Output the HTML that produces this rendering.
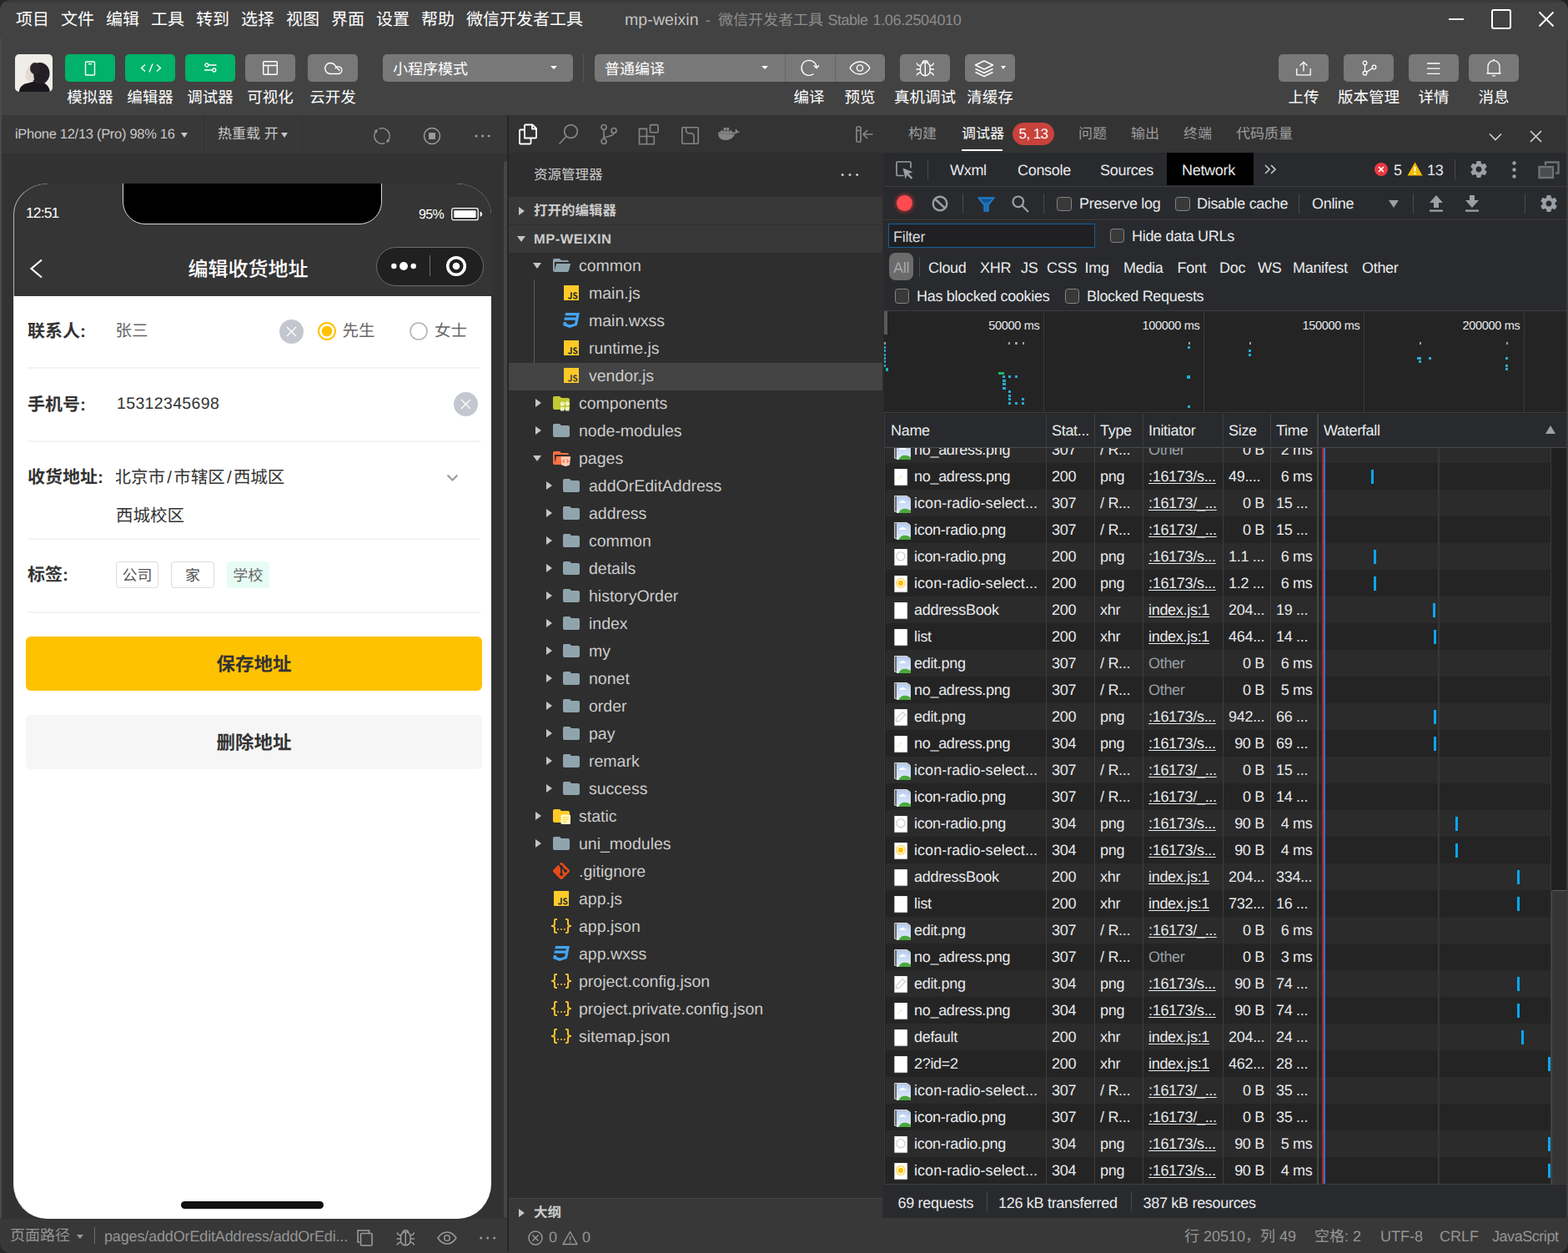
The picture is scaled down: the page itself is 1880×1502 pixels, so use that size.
<!DOCTYPE html>
<html lang="zh-CN">
<head>
<meta charset="utf-8">
<title>mp-weixin - WeChat DevTools</title>
<style>
html,body{margin:0;padding:0}
body{width:1880px;height:1502px;overflow:hidden;position:relative;background:#424242;font-family:"Liberation Sans","Noto Sans CJK SC",sans-serif;color:#fff;font-size:18px;-webkit-font-smoothing:antialiased;text-rendering:geometricPrecision}
*{box-sizing:border-box}
.a{position:absolute}
.t{position:absolute;white-space:nowrap;line-height:24px;height:24px}
svg{display:block}
svg.i{position:absolute;overflow:visible}
/* top */
#menubar{left:0;top:0;width:1880px;height:46px;background:#424242}
#menubar .m{position:absolute;top:11.5px;font-size:20px;line-height:24px;color:#fff;white-space:nowrap}
#toolbar{left:0;top:46px;width:1880px;height:92px;background:#424242}
.tb{position:absolute;top:19px;width:60px;height:33px;border-radius:5px;background:#787878}
.tb.g{background:#00b26a}
.tl{position:absolute;top:59px;width:120px;margin-left:-30px;text-align:center;font-size:18.5px;line-height:24px;color:#fff;white-space:nowrap}
.dd{position:absolute;top:19px;height:33px;background:#787878;border-radius:5px;font-size:18px;line-height:37px;color:#fff;padding-left:12px}
.caret{position:absolute;width:0;height:0;border-left:4px solid transparent;border-right:4px solid transparent;border-top:4.5px solid #fff}
</style>
<style>
/* sim */
#simbar{left:2px;top:138px;width:606px;height:46px;background:#383838}
#simpanel{left:2px;top:184px;width:606px;height:1277px;background:#323232;z-index:2}
#phone{z-index:3}
#vdiv1{left:608px;top:138px;width:2px;height:1324px;background:#262626}
#phone{left:16px;top:220px;width:573.4px;height:1240.5px;border-radius:42px 42px 40px 40px/37px 37px 42px 42px;background:#fff;overflow:hidden}
#pedge{left:0;top:0;width:574px;height:1240px;border-radius:inherit;box-shadow:inset 1px 0 0 rgba(235,225,208,.75)}
#pnav{left:0;top:0;width:574px;height:134.7px;background:#353535}
.lbl{position:absolute;left:17px;font-size:21px;line-height:28px;color:#333;white-space:nowrap}
.val{position:absolute;left:123px;font-size:19.5px;line-height:28px;color:#666;white-space:nowrap}
.hr{position:absolute;left:17px;width:543px;height:2px;background:#f3f3f3}
.clr{position:absolute;width:29px;height:29px;border-radius:50%;background:#c4c7d0}
.sl{font-style:normal;display:inline-block;width:10.2px;text-align:center}
.tag{position:absolute;top:453px;height:32px;border:1px solid #dcdcdc;border-radius:4px;font-size:18px;line-height:32px;color:#555;text-align:center;background:#fff}
.btn{position:absolute;left:15px;width:547px;height:64px;border-radius:6px;font-size:22px;line-height:64px;text-align:center;color:#333}
</style>
<style>
/* explorer */
#iconbar{left:610px;top:138px;width:1270px;height:45px;background:#333}
#explorer{left:610px;top:183px;width:448px;height:1279px;background:#2e2e2e;overflow:hidden}
.sec{position:absolute;left:0;width:448px;height:33px;background:#383838;font-size:16.5px;line-height:35px;color:#ccc;font-weight:bold;padding-left:30px;white-space:nowrap}
.row{position:absolute;left:0;width:448px;height:33px;font-size:19.5px;line-height:33px;color:#ccc;white-space:nowrap;letter-spacing:0}
.row.sel{background:#444}
.row span{position:absolute;top:0}
.tri-r{position:absolute;width:0;height:0;border-top:5px solid transparent;border-bottom:5px solid transparent;border-left:7px solid #c5c5c5}
.tri-d{position:absolute;width:0;height:0;border-left:5px solid transparent;border-right:5px solid transparent;border-top:7px solid #c5c5c5}
#vdiv2{left:1058px;top:183px;width:2px;height:1279px;background:#2c2c2c}
/* status */
#status{left:0;top:1460px;width:1880px;height:42px;background:#383838;color:#9a9a9a;font-size:18px}
#status .t{top:10px;color:#959595}
</style>
<style>
/* devtools */
#dev{left:1060px;top:183px;width:818px;height:1277px;background:#242424;overflow:hidden;color:#e8eaed;font-size:18px;letter-spacing:-0.3px}
#dtabs{left:0;top:0;width:818px;height:41px;background:#292a2d;border-bottom:1px solid #3d3d3d}
#dtabs .t{top:9px;color:#e8eaed}
#ntool{left:0;top:41px;width:818px;height:40px;background:#292a2d;border-bottom:1px solid #3d3d3d}
#ntool .t{top:8px}
.vsep{position:absolute;width:1px;background:#4a4a4a}
.cb{position:absolute;width:17.5px;height:17.5px;border:1.5px solid #858585;border-radius:3.5px;background:#393939}
#frow{left:0;top:82px;width:818px;height:38px;background:#292a2d}
#trow{left:0;top:120px;width:818px;height:37px;background:#292a2d}
#brow{left:0;top:157px;width:818px;height:33px;background:#292a2d;border-bottom:1px solid #3d3d3d}
#ov{left:0;top:190px;width:818px;height:122px;background:#242424;border-bottom:1px solid #3d3d3d}
#th{left:0;top:313px;width:818px;height:41px;background:#292a2d;border-bottom:1px solid #4a4a4a}
#th .t{top:8px;color:#e8eaed}
#rows{left:2px;top:354px;width:798px;height:883px;overflow:hidden}
.r{position:absolute;left:-2px;width:800px;height:32px;line-height:32px;white-space:nowrap;color:#e8eaed}
.r.o{background:#2b2b2b}
.r.red{color:#9aa0a6}
.r span{position:absolute;top:0}
.r u{text-decoration:underline;text-underline-offset:2px}
.colsep{position:absolute;top:313px;width:1px;height:924px;background:#3d3d3d}
.wb{position:absolute;width:3px;height:17px;background:#0ba6f2}
#sum{left:0;top:1236px;width:818px;height:41px;background:#292a2d;border-top:1px solid #3d3d3d}
#sum .t{top:10px;color:#e8eaed}
</style>
</head>
<body>
<!-- ===== menubar ===== -->
<div class="a" id="menubar">
<div class="a" style="left:0;top:0;width:1880px;height:3px;background:#3a3a3a"></div>
<div class="m" style="left:19px">项目</div><div class="m" style="left:73px">文件</div><div class="m" style="left:127px">编辑</div><div class="m" style="left:181px">工具</div><div class="m" style="left:235px">转到</div><div class="m" style="left:289px">选择</div><div class="m" style="left:343px">视图</div><div class="m" style="left:397px">界面</div><div class="m" style="left:451px">设置</div><div class="m" style="left:505px">帮助</div><div class="m" style="left:559px">微信开发者工具</div>
<div class="m" style="left:749px;color:#c2c2c2;font-size:19.5px;letter-spacing:0.1px">mp-weixin</div><div class="m" style="left:846px;color:#8c8c8c;font-size:18px">-</div><div class="m" style="left:861px;color:#8c8c8c;font-size:18px">微信开发者工具</div><div class="m" style="left:992.5px;color:#8c8c8c;font-size:18px;letter-spacing:-0.5px">Stable</div><div class="m" style="left:1046.5px;color:#8c8c8c;font-size:18px;letter-spacing:-0.35px">1.06.2504010</div>
<svg class="i" style="left:1730px;top:6px" width="140" height="36" viewBox="0 0 140 36" fill="none" stroke="#fff"><path d="M7 17H25" stroke-width="1.8"/><rect x="59" y="6" width="22" height="22" rx="2" stroke-width="2"/><path d="M115.5 8.500L132.500 25.500M132.500 8.500L115.500 25.500" stroke-width="1.900"/></svg>
</div>
<!-- ===== toolbar ===== -->
<div class="a" id="toolbar">
<div class="a" style="left:18px;top:19px;width:45px;height:45px;border-radius:5px;background:#efede7;overflow:hidden">
 <svg class="i" style="left:0;top:0" width="45" height="45" viewBox="0 0 45 45"><path d="M5 45c0-5 4-9.500 11-10.500l9-2.500c8 0 16 4 17 13z" fill="#19171c"/><ellipse cx="30" cy="23" rx="11.500" ry="13" fill="#231f24"/><path d="M21 13c-4 0-8 4-8 10c0 2 0 3-1 4.500c1 2 3 3 5 5.500l6-2z" fill="#e4d9d3"/><ellipse cx="24" cy="17" rx="6" ry="7" fill="#2b2529"/></svg>
</div>
<div class="tb g" style="left:78px"><svg class="i" style="left:23px;top:8px" width="14" height="18" viewBox="0 0 14 18" fill="none" stroke="#fff" stroke-width="1.4"><rect x="1.5" y="1" width="11" height="16" rx="1"/><path d="M5 3.7h4"/></svg></div>
<div class="tb g" style="left:150px"><svg class="i" style="left:18px;top:10px" width="26" height="13" viewBox="0 0 26 13" fill="none" stroke="#fff" stroke-width="1.4"><path d="M6 2.5L1.5 6.5L6 10.5M20 2.5L24.5 6.5L20 10.5M15 1.5L11 11.5"/></svg></div>
<div class="tb g" style="left:222px"><svg class="i" style="left:22.500px;top:10px" width="15" height="12" viewBox="0 0 15 12" fill="none" stroke="#fff" stroke-width="1.300"><path d="M5 3H14.500M0 9H9.500"/><circle cx="2.800" cy="3" r="2"/><circle cx="11.800" cy="9" r="2"/></svg></div>
<div class="tb" style="left:294px"><svg class="i" style="left:21px;top:8px" width="18" height="17" viewBox="0 0 18 17" fill="none" stroke="#fff" stroke-width="1.4"><rect x="0.7" y="0.7" width="16.6" height="15.6" rx="1"/><path d="M0.7 5.5H17.3M6.5 5.5V16.3"/></svg></div>
<div class="tb" style="left:369px"><svg class="i" style="left:19.500px;top:9px" width="22" height="16" viewBox="0 0 22 16" fill="none" stroke="#fff" stroke-width="1.300"><path d="M11.200 14.500H7.300a6.500 6.500 0 1 1 5.400-10l5.800 6.500M11.200 14.500h5.300a4.300 4.300 0 1 0-3.800-6.300"/></svg></div>
<div class="tl" style="left:78px">模拟器</div><div class="tl" style="left:150px">编辑器</div><div class="tl" style="left:222px">调试器</div><div class="tl" style="left:294px">可视化</div><div class="tl" style="left:369px">云开发</div>
<div class="dd" style="left:459px;width:228px">小程序模式<div class="caret" style="left:201px;top:14px"></div></div>
<div class="a" style="left:699px;top:19px;width:1px;height:33px;background:#565656"></div>
<div class="dd" style="left:713px;width:348px">普通编译<div class="caret" style="left:200px;top:14px"></div>
 <div class="a" style="left:228px;top:0;width:1px;height:33px;background:#666"></div><div class="a" style="left:288px;top:0;width:1px;height:33px;background:#666"></div>
 <svg class="i" style="left:246px;top:6px" width="22" height="21" viewBox="0 0 22 21" fill="none" stroke="#fff" stroke-width="1.4"><path d="M16.500 17.500A9 9 0 1 1 20 10.300"/><path d="M16.700 7.500L20.100 10.800L23 7.300"/></svg>
 <svg class="i" style="left:305px;top:8px" width="26" height="17" viewBox="0 0 26 17" fill="none" stroke="#fff" stroke-width="1.4"><path d="M1 8.5C4 3.5 8 1 13 1s9 2.5 12 7.5c-3 5-7 7.500-12 7.500S4 13.500 1 8.500z"/><circle cx="13" cy="8.500" r="3.600"/></svg>
</div>
<div class="tl" style="left:940px">编译</div><div class="tl" style="left:1001px">预览</div>
<div class="tb" style="left:1079px"><svg class="i" style="left:17px;top:5px" width="26" height="23" viewBox="0 0 26 23" fill="none" stroke="#fff" stroke-width="1.4"><path d="M7.500 10.500a5.800 5.800 0 0 1 11.600 0v4.500a5.800 5.800 0 0 1-11.600 0z"/><path d="M13.300 4.800v16M9.800 5.500a3.600 3.600 0 0 1 7 0M7.500 9L4.500 8L3 5.500M7.500 13H2.500M7.500 17l-3 1l-1.500 2.500M19.100 9l3-1l1.500-2.500M19.100 13h5M19.100 17l3 1l1.500 2.500"/></svg></div>
<div class="tb" style="left:1157px"><svg class="i" style="left:11px;top:7px" width="24" height="20" viewBox="0 0 24 20" fill="none" stroke="#fff" stroke-width="1.4" stroke-linejoin="round"><path d="M12 1L22.500 6L12 11L1.500 6z"/><path d="M1.500 10.500L12 15.500l10.500-5M1.500 14.500L12 19.500l10.500-5"/></svg><div class="caret" style="left:43px;top:14px;border-left-width:3.700px;border-right-width:3.700px;border-top-width:4.800px"></div></div>
<div class="tl" style="left:1079px">真机调试</div><div class="tl" style="left:1157px">清缓存</div>
<div class="tb" style="left:1533px"><svg class="i" style="left:21px;top:8px" width="18" height="18" viewBox="0 0 18 18" fill="none" stroke="#fff" stroke-width="1.300"><path d="M.8 9V16.800H17.200V9M9 12.500V1.500M4.500 5.800L9 1.300l4.500 4.500"/></svg></div>
<div class="tb" style="left:1611px"><svg class="i" style="left:22px;top:7px" width="18" height="19" viewBox="0 0 18 19" fill="none" stroke="#fff" stroke-width="1.300"><circle cx="3.500" cy="3.500" r="2.300"/><circle cx="3.500" cy="15.700" r="2.300"/><circle cx="14.500" cy="8.500" r="2.300"/><path d="M3.500 5.800v7.600M5.400 14.400L12.600 9.800"/></svg></div>
<div class="tb" style="left:1689px"><svg class="i" style="left:22px;top:10px" width="16" height="14" viewBox="0 0 16 14" fill="none" stroke="#fff" stroke-width="1.300"><path d="M0 1h15.500M0 7.200h15.500M0 13.400h15.500"/></svg></div>
<div class="tb" style="left:1761px"><svg class="i" style="left:21px;top:5px" width="18" height="22" viewBox="0 0 18 22" fill="none" stroke="#fff" stroke-width="1.300"><path d="M2 18V9.700a7 7 0 0 1 14 0V18M.5 18h17M9 2.600V.8M7 20.800h4"/></svg></div>
<div class="tl" style="left:1533px">上传</div><div class="tl" style="left:1611px">版本管理</div><div class="tl" style="left:1689px">详情</div><div class="tl" style="left:1761px">消息</div>
</div>
<!-- ===== simulator ===== -->
<div class="a" style="left:0;top:46px;width:2px;height:1456px;background:#4a4a4a"></div>
<div class="a" id="simbar">
<div class="t" style="left:16px;top:11px;font-size:16.5px;color:#c8c8c8;letter-spacing:-0.3px">iPhone 12/13 (Pro) 98% 16</div>
<div class="caret" style="left:215px;top:21px;border-top-color:#c8c8c8;border-left-width:4.5px;border-right-width:4.5px;border-top-width:6px"></div>
<div class="a" style="left:242px;top:0;width:1px;height:46px;background:#313131"></div>
<div class="t" style="left:259px;top:11px;font-size:17px;color:#c8c8c8">热重载 开</div>
<div class="caret" style="left:335px;top:21px;border-top-color:#c8c8c8;border-left-width:4.5px;border-right-width:4.5px;border-top-width:6px"></div>
<div class="a" style="left:360px;top:0;width:1px;height:46px;background:#313131"></div>
<svg class="i" style="left:445.200px;top:14px" width="22" height="22" viewBox="0 0 22 22" fill="none" stroke="#9a9a9a" stroke-width="1.400"><path d="M14.45 19.53A9.2 9.2 0 0 1 3.75 5.34M7.55 2.47A9.2 9.2 0 0 1 18.25 16.66"/><path d="M5.72 2.81L1.68 4.74L4.83 7.20zM16.28 19.19L20.32 17.26L17.17 14.80z" fill="#9a9a9a" stroke="none"/></svg>
<svg class="i" style="left:505px;top:14px" width="22" height="22" viewBox="0 0 22 22" fill="none" stroke="#9a9a9a" stroke-width="1.500"><circle cx="11" cy="11" r="9.500"/><rect x="7" y="7" width="8" height="8" rx="1" fill="#9a9a9a" stroke="none"/></svg>
<svg class="i" style="left:566.500px;top:23px" width="22" height="4" viewBox="0 0 22 4" fill="#9a9a9a"><circle cx="2" cy="2" r="1.600"/><circle cx="9.600" cy="2" r="1.600"/><circle cx="17.100" cy="2" r="1.600"/></svg>
</div>
<div class="a" id="simpanel">
<div class="a" style="left:602px;top:9px;width:3.500px;height:1267px;background:#464646;border-radius:2px"></div>
</div>
<div class="a" id="vdiv1"></div>
<div class="a" id="phone">
 <div class="a" id="pnav">
  <div class="a" style="left:131px;top:-2px;width:311px;height:50.500px;background:#000;border:1px solid #d8d8d8;border-radius:0 0 27px 27px"></div>
  <div class="t" style="left:15px;top:23px;font-size:17.500px;color:#fff;letter-spacing:-0.900px">12:51</div>
  <div class="t" style="left:486px;top:26px;font-size:16px;color:#fff;letter-spacing:-0.700px">95%</div>
  <svg class="i" style="left:524px;top:28px" width="40" height="18" viewBox="0 0 40 18"><rect x="1.700" y="1.700" width="31.500" height="14" rx="2.200" fill="none" stroke="#fff" stroke-width="1.300"/><rect x="4.300" y="4.300" width="26.300" height="8.800" rx=".8" fill="#fff"/><path d="M35.700 5.800c3.300 .8 3.300 5 0 5.900z" fill="#fff"/></svg>
  <svg class="i" style="left:19px;top:90px" width="17" height="24" viewBox="0 0 17 24" fill="none" stroke="#fff" stroke-width="2.200"><path d="M15 1.500L2.500 12L15 22.500"/></svg>
  <div class="t" style="left:209.500px;top:87.500px;font-size:24px;line-height:32px;height:32px;color:#fff;font-weight:500">编辑收货地址</div>
  <div class="a" style="left:435px;top:75.500px;width:128.500px;height:47px;border-radius:24px;border:1px solid #6c6c6c;background:#202020"></div>
  <svg class="i" style="left:435px;top:75px" width="129" height="48" viewBox="0 0 129 48"><circle cx="21.300" cy="24" r="3.200" fill="#fff"/><circle cx="33" cy="24" r="5" fill="#fff"/><circle cx="44.700" cy="24" r="3.200" fill="#fff"/><path d="M64.500 11v25" stroke="#6c6c6c" stroke-width="1"/><circle cx="96" cy="24" r="10.300" fill="none" stroke="#fff" stroke-width="3.500"/><circle cx="96" cy="24" r="4.300" fill="#fff"/></svg>
 </div>
 <!-- row 1 -->
 <div class="lbl" style="top:164px"><b>联系人</b><b>:</b></div>
 <div class="val" style="top:162.500px;left:122.500px">张三</div>
 <div class="clr" style="left:318.500px;top:163px"></div><svg class="i" style="left:318.500px;top:163px" width="29" height="29" viewBox="0 0 29 29" stroke="#fff" stroke-width="1.400"><path d="M9 9l11 11M20 9L9 20"/></svg>
 <svg class="i" style="left:364px;top:165px" width="24" height="24" viewBox="0 0 24 24"><circle cx="12" cy="12" r="10" fill="#fff" stroke="#ffc200" stroke-width="2"/><circle cx="12" cy="12" r="6.300" fill="#ffc200"/></svg>
 <div class="val" style="top:162.500px;left:394.500px">先生</div>
 <svg class="i" style="left:474px;top:165px" width="24" height="24" viewBox="0 0 24 24"><circle cx="12" cy="12" r="10" fill="#fff" stroke="#b5b5b5" stroke-width="1.600"/></svg>
 <div class="val" style="top:162.500px;left:505px">女士</div>
 <div class="hr" style="top:220px"></div>
 <!-- row 2 -->
 <div class="lbl" style="top:252px"><b>手机号</b><b>:</b></div>
 <div class="val" style="top:250px;left:124px;color:#333;font-size:19.500px;letter-spacing:0.350px">15312345698</div>
 <div class="clr" style="left:527.500px;top:250px"></div><svg class="i" style="left:527.500px;top:250px" width="29" height="29" viewBox="0 0 29 29" stroke="#fff" stroke-width="1.400"><path d="M9 9l11 11M20 9L9 20"/></svg>
 <div class="hr" style="top:308px"></div>
 <!-- row 3 -->
 <div class="lbl" style="top:339px"><b>收货地址</b><b>:</b></div>
 <div class="a" style="left:122.500px;top:336px;width:380px;height:34px;overflow:hidden"><div class="val" style="left:-2px;top:3px;color:#333;font-size:20.500px">北京市<i class="sl">/</i>市辖区<i class="sl">/</i>西城区</div></div>
 <svg class="i" style="left:519px;top:348px" width="15" height="10" viewBox="0 0 15 10" fill="none" stroke="#9a9a9a" stroke-width="2"><path d="M1.500 1.500l6 6l6-6"/></svg>
 <div class="val" style="left:123px;top:385px;color:#333;font-size:20.500px">西城校区</div>
 <div class="hr" style="top:425px"></div>
 <!-- row 4 -->
 <div class="lbl" style="top:456px"><b>标签</b><b>:</b></div>
 <div class="tag" style="left:123px;width:51px">公司</div>
 <div class="tag" style="left:189px;width:52px">家</div>
 <div class="tag" style="left:256px;width:50.500px;background:#e6fcf5;border-color:#e6fcf5;color:#666">学校</div>
 <div class="hr" style="top:513px"></div>
 <div class="btn" style="top:543px;height:64.500px;line-height:68px;font-size:22.500px;background:#ffc200"><b>保存地址</b></div>
 <div class="btn" style="top:637px;height:64.500px;line-height:68px;font-size:22.500px;background:#f6f6f6"><b>删除地址</b></div>
 <div class="a" style="left:201px;top:1220px;width:171px;height:9px;border-radius:5px;background:#111"></div>
 <div class="a" id="pedge"></div>
</div>
<!-- ===== icon bar + panel tabs ===== -->
<svg width="0" height="0" style="position:absolute"><defs>
<symbol id="i-folder" viewBox="0 0 24 24"><path fill="#90a4ae" d="M10 4H4c-1.110 0-2 .890-2 2v12a2 2 0 0 0 2 2h16a2 2 0 0 0 2-2V8c0-1.110-.900-2-2-2h-8l-2-2z"/></symbol>
<symbol id="i-folder-open" viewBox="0 0 24 24"><path fill="#90a4ae" d="M19 20H4a2 2 0 0 1-2-2V6c0-1.110.890-2 2-2h6l2 2h7a2 2 0 0 1 2 2H4v10l2.140-8h17.070l-2.280 8.500c-.230.870-1.010 1.500-1.930 1.500z"/></symbol>
<symbol id="i-js" viewBox="0 0 24 24"><path fill="#ffca28" d="M3 3h18v18H3V3m4.730 15.040c.400.850 1.190 1.550 2.540 1.550 1.500 0 2.530-.800 2.530-2.550v-5.780h-1.700V17c0 .860-.350 1.080-.900 1.080-.580 0-.820-.400-1.090-.870l-1.380.830m5.980-.180c.500.980 1.510 1.730 3.090 1.730 1.600 0 2.800-.830 2.800-2.360 0-1.410-.810-2.040-2.250-2.660l-.420-.180c-.730-.310-1.040-.520-1.040-1.020 0-.410.310-.730.810-.730.480 0 .800.210 1.090.730l1.310-.870c-.550-.960-1.330-1.330-2.400-1.330-1.510 0-2.480.960-2.480 2.230 0 1.380.810 2.030 2.030 2.550l.420.180c.780.340 1.240.550 1.240 1.130 0 .480-.450.830-1.150.830-.830 0-1.310-.430-1.670-1.030l-1.380.800z"/></symbol>
<symbol id="i-css" viewBox="0 0 24 24"><path fill="#42a5f5" d="M5 3l-.650 3.340h13.590L17.500 8.500H3.920l-.660 3.330h13.590l-.760 3.810-5.480 1.810-4.750-1.810.330-1.640H2.850l-.790 4 7.850 3 9.050-3 1.200-6.030.240-1.210L21.940 3H5z"/></symbol>
<symbol id="i-json" viewBox="0 0 24 24"><path fill="#fbc02d" d="M5 3h2v2H5v5a2 2 0 0 1-2 2 2 2 0 0 1 2 2v5h2v2H5c-1.070-.270-2-.900-2-2v-4a2 2 0 0 0-2-2H0v-2h1a2 2 0 0 0 2-2V5a2 2 0 0 1 2-2m14 0a2 2 0 0 1 2 2v4a2 2 0 0 0 2 2h1v2h-1a2 2 0 0 0-2 2v4a2 2 0 0 1-2 2h-2v-2h2v-5a2 2 0 0 1 2-2 2 2 0 0 1-2-2V5h-2V3h2m-7 12a1 1 0 0 1 1 1 1 1 0 0 1-1 1 1 1 0 0 1-1-1 1 1 0 0 1 1-1m-4 0a1 1 0 0 1 1 1 1 1 0 0 1-1 1 1 1 0 0 1-1-1 1 1 0 0 1 1-1m8 0a1 1 0 0 1 1 1 1 1 0 0 1-1 1 1 1 0 0 1-1-1 1 1 0 0 1 1-1z"/></symbol>
<symbol id="i-git" viewBox="0 0 24 24"><path fill="#e64a19" d="M2.600 10.590L8.380 4.800l1.690 1.700c-.240.850.150 1.780.930 2.230v5.540c-.600.340-1 .990-1 1.730a2 2 0 0 0 2 2 2 2 0 0 0 2-2c0-.740-.400-1.390-1-1.730V9.410l2.070 2.090c-.070.150-.070.320-.070.500a2 2 0 0 0 2 2 2 2 0 0 0 2-2 2 2 0 0 0-2-2c-.180 0-.350 0-.500.070L13.930 7.500a1.980 1.980 0 0 0-1.150-2.340c-.430-.160-.880-.200-1.280-.090L9.800 3.380l.790-.780c.780-.790 2.040-.790 2.820 0l7.990 7.990c.790.780.790 2.040 0 2.820l-7.990 7.990c-.780.790-2.040.790-2.820 0L2.600 13.410c-.790-.780-.790-2.040 0-2.820z"/></symbol>
<symbol id="i-fcomp" viewBox="0 0 24 24"><path fill="#c0ca33" d="M10 4H4c-1.110 0-2 .890-2 2v12a2 2 0 0 0 2 2h16a2 2 0 0 0 2-2V8c0-1.110-.900-2-2-2h-8l-2-2z"/><path fill="#f0f4c3" d="M11 11h4.500v4.500H11zM11 17h4.500v4.500H11zM17 17h4.500v4.500H17zM19.250 9.500l3.200 3.250-3.200 3.250-3.200-3.250z"/></symbol>
<symbol id="i-fpages" viewBox="0 0 24 24"><path fill="#ff7043" d="M19 20H4a2 2 0 0 1-2-2V6c0-1.110.890-2 2-2h6l2 2h7a2 2 0 0 1 2 2H4v10l2.140-8h17.070l-2.280 8.500c-.230.870-1.010 1.500-1.930 1.500z"/><path fill="#ffccbc" d="M11.500 10.500h11.500l-1 10-4.750 1.500-4.750-1.500z"/><path fill="none" stroke="#ff7043" stroke-width="1.300" d="M16 13.700l-2 2 2 2M18.500 13.700l2 2-2 2"/></symbol>
<symbol id="i-fstatic" viewBox="0 0 24 24"><path fill="#ffca28" d="M10 4H4c-1.110 0-2 .890-2 2v12a2 2 0 0 0 2 2h16a2 2 0 0 0 2-2V8c0-1.110-.900-2-2-2h-8l-2-2z"/><path fill="#fff9c4" d="M13 10.500h8.500a1.500 1.500 0 0 1 1.500 1.500v8.500a1.500 1.500 0 0 1-1.500 1.500H13a1.500 1.500 0 0 1-1.500-1.500V12a1.500 1.500 0 0 1 1.500-1.500z"/><path stroke="#ffca28" stroke-width="1.200" d="M14 14h6.500M14 16.500h6.500M14 19h4.500"/></symbol>
</defs></svg>
<div class="a" id="iconbar">
<svg class="i" style="left:11px;top:10px" width="24" height="26" viewBox="0 0 24 26" fill="none" stroke="#fff" stroke-width="1.800" stroke-linejoin="round"><path d="M8 17.500V2.500a1 1 0 0 1 1-1h8.500l4.500 4.500v10.500a1 1 0 0 1-1 1z"/><path d="M17 1.500v5h5"/><path d="M8 7.500H3a1 1 0 0 0-1 1v15a1 1 0 0 0 1 1h11.500a1 1 0 0 0 1-1v-6"/></svg>
<svg class="i" style="left:59px;top:10px" width="25" height="26" viewBox="0 0 25 26" fill="none" stroke="#858585" stroke-width="1.800"><circle cx="15.500" cy="9.500" r="7.800"/><path d="M10 15.500L1.500 24.500"/></svg>
<svg class="i" style="left:109.300px;top:10px" width="22" height="26" viewBox="0 0 22 26" fill="none" stroke="#858585" stroke-width="1.700"><circle cx="5" cy="4.500" r="3"/><circle cx="5" cy="21.500" r="3"/><circle cx="17" cy="8.500" r="3"/><path d="M5 7.500v11M17 11.500c0 5-12 3-12 7"/></svg>
<svg class="i" style="left:155px;top:10px" width="26" height="26" viewBox="0 0 26 26" fill="none" stroke="#858585" stroke-width="1.600"><path d="M1.500 6.400H10.400V15.500H19.300V24.700H1.500ZM1.500 15.500H10.400V24.700"/><rect x="14.500" y="1.600" width="9.600" height="9.200" rx="1"/></svg>
<svg class="i" style="left:207px;top:14px" width="21" height="21" viewBox="0 0 21 21" fill="none" stroke="#858585" stroke-width="1.600"><rect x=".8" y=".8" width="19.400" height="19.400" rx="1"/><path d="M5.500 .8v3.500a3.500 3.500 0 0 0 3.500 3.500h2.500a3.500 3.500 0 0 1 3.500 3.500v9"/></svg>
<svg class="i" style="left:250px;top:13px" width="27" height="20" viewBox="0 0 27 20" fill="#858585"><path d="M1 9.500h19.500c1.800 0 3-.600 3.800-1.800c.800.300 1.800.300 2.500-.200c-.600-1-1.500-1.300-2.500-1.100c-.300-1.400-1-2.300-2-2.900c-1 1.300-1 2.800-.300 4H1c-.500 5 2.500 9.500 8.500 9.500c5.500 0 9.500-2.500 11.500-7z"/><rect x="4" y="5.500" width="3" height="3"/><rect x="7.600" y="5.500" width="3" height="3"/><rect x="11.200" y="5.500" width="3" height="3"/><rect x="7.600" y="2" width="3" height="3"/><rect x="11.200" y="2" width="3" height="3"/><rect x="14.800" y="5.500" width="3" height="3"/></svg>
<svg class="i" style="left:416px;top:13px" width="21" height="20" viewBox="0 0 21 20" fill="none" stroke="#858585" stroke-width="1.700"><rect x="1" y="1" width="5" height="18" rx="1"/><path d="M1 5.500h5M20.500 10H9.500M14 5l-5 5l5 5"/></svg>
<div class="t" style="left:479px;top:11px;font-size:17px;color:#9d9d9d">构建</div>
<div class="t" style="left:543px;top:11px;font-size:17px;color:#fff">调试器</div>
<div class="a" style="left:543px;top:41.300px;width:49px;height:1.600px;background:#fff"></div>
<div class="a" style="left:604px;top:9px;width:50px;height:27px;border-radius:14px;background:#c9423c;font-size:17px;line-height:27px;text-align:center;color:#fff;letter-spacing:-0.600px">5, 13</div>
<div class="t" style="left:683px;top:11px;font-size:17px;color:#9d9d9d">问题</div>
<div class="t" style="left:746px;top:11px;font-size:17px;color:#9d9d9d">输出</div>
<div class="t" style="left:809px;top:11px;font-size:17px;color:#9d9d9d">终端</div>
<div class="t" style="left:872px;top:11px;font-size:17px;color:#9d9d9d">代码质量</div>
<svg class="i" style="left:1175px;top:21px" width="16" height="10" viewBox="0 0 16 10" fill="none" stroke="#d0d0d0" stroke-width="1.700"><path d="M1 1.500l7 7l7-7"/></svg>
<svg class="i" style="left:1224px;top:18px" width="15" height="15" viewBox="0 0 15 15" fill="none" stroke="#d0d0d0" stroke-width="1.700"><path d="M1 1l13 13M14 1L1 14"/></svg>
</div>
<!-- ===== explorer ===== -->
<div class="a" id="explorer">
<div class="t" style="left:30px;top:15px;font-size:16.500px;color:#ccc">资源管理器</div>
<svg class="i" style="left:398px;top:24px" width="24" height="5" viewBox="0 0 24 5" fill="#ccc"><circle cx="2.200" cy="2.500" r="1.500"/><circle cx="11" cy="2.500" r="1.500"/><circle cx="19.700" cy="2.500" r="1.500"/></svg>
<div class="sec" style="top:53px">打开的编辑器<div class="tri-r" style="left:12px;top:11.500px"></div></div>
<div class="sec" style="top:87px;height:32.500px;letter-spacing:0.500px">MP-WEIXIN<div class="tri-d" style="left:10px;top:13px"></div></div>
<div class="a" style="left:30px;top:152px;width:1px;height:132px;background:#5a5a5a"></div>
<div class="row" style="top:119.5px"><div class="tri-d" style="left:29px;top:12px"></div><svg class="i" style="left:51.4px;top:3.5px" width="24" height="24"><use href="#i-folder-open"/></svg><span style="left:84px">common</span></div>
<div class="row" style="top:152.5px"><svg class="i" style="left:63px;top:3.5px" width="24" height="24"><use href="#i-js"/></svg><span style="left:96px">main.js</span></div>
<div class="row" style="top:185.5px"><svg class="i" style="left:63px;top:3.5px" width="24" height="24"><use href="#i-css"/></svg><span style="left:96px">main.wxss</span></div>
<div class="row" style="top:218.5px"><svg class="i" style="left:63px;top:3.5px" width="24" height="24"><use href="#i-js"/></svg><span style="left:96px">runtime.js</span></div>
<div class="row sel" style="top:251.5px"><svg class="i" style="left:63px;top:3.5px" width="24" height="24"><use href="#i-js"/></svg><span style="left:96px">vendor.js</span></div>
<div class="row" style="top:284.5px"><div class="tri-r" style="left:31.5px;top:10.5px"></div><svg class="i" style="left:51.4px;top:3.5px" width="24" height="24"><use href="#i-fcomp"/></svg><span style="left:84px">components</span></div>
<div class="row" style="top:317.5px"><div class="tri-r" style="left:31.5px;top:10.5px"></div><svg class="i" style="left:51.4px;top:3.5px" width="24" height="24"><use href="#i-folder"/></svg><span style="left:84px">node-modules</span></div>
<div class="row" style="top:350.5px"><div class="tri-d" style="left:29px;top:12px"></div><svg class="i" style="left:51.4px;top:3.5px" width="24" height="24"><use href="#i-fpages"/></svg><span style="left:84px">pages</span></div>
<div class="row" style="top:383.5px"><div class="tri-r" style="left:45.0px;top:10.5px"></div><svg class="i" style="left:63px;top:3.5px" width="24" height="24"><use href="#i-folder"/></svg><span style="left:96px">addOrEditAddress</span></div>
<div class="row" style="top:416.5px"><div class="tri-r" style="left:45.0px;top:10.5px"></div><svg class="i" style="left:63px;top:3.5px" width="24" height="24"><use href="#i-folder"/></svg><span style="left:96px">address</span></div>
<div class="row" style="top:449.5px"><div class="tri-r" style="left:45.0px;top:10.5px"></div><svg class="i" style="left:63px;top:3.5px" width="24" height="24"><use href="#i-folder"/></svg><span style="left:96px">common</span></div>
<div class="row" style="top:482.5px"><div class="tri-r" style="left:45.0px;top:10.5px"></div><svg class="i" style="left:63px;top:3.5px" width="24" height="24"><use href="#i-folder"/></svg><span style="left:96px">details</span></div>
<div class="row" style="top:515.5px"><div class="tri-r" style="left:45.0px;top:10.5px"></div><svg class="i" style="left:63px;top:3.5px" width="24" height="24"><use href="#i-folder"/></svg><span style="left:96px">historyOrder</span></div>
<div class="row" style="top:548.5px"><div class="tri-r" style="left:45.0px;top:10.5px"></div><svg class="i" style="left:63px;top:3.5px" width="24" height="24"><use href="#i-folder"/></svg><span style="left:96px">index</span></div>
<div class="row" style="top:581.5px"><div class="tri-r" style="left:45.0px;top:10.5px"></div><svg class="i" style="left:63px;top:3.5px" width="24" height="24"><use href="#i-folder"/></svg><span style="left:96px">my</span></div>
<div class="row" style="top:614.5px"><div class="tri-r" style="left:45.0px;top:10.5px"></div><svg class="i" style="left:63px;top:3.5px" width="24" height="24"><use href="#i-folder"/></svg><span style="left:96px">nonet</span></div>
<div class="row" style="top:647.5px"><div class="tri-r" style="left:45.0px;top:10.5px"></div><svg class="i" style="left:63px;top:3.5px" width="24" height="24"><use href="#i-folder"/></svg><span style="left:96px">order</span></div>
<div class="row" style="top:680.5px"><div class="tri-r" style="left:45.0px;top:10.5px"></div><svg class="i" style="left:63px;top:3.5px" width="24" height="24"><use href="#i-folder"/></svg><span style="left:96px">pay</span></div>
<div class="row" style="top:713.5px"><div class="tri-r" style="left:45.0px;top:10.5px"></div><svg class="i" style="left:63px;top:3.5px" width="24" height="24"><use href="#i-folder"/></svg><span style="left:96px">remark</span></div>
<div class="row" style="top:746.5px"><div class="tri-r" style="left:45.0px;top:10.5px"></div><svg class="i" style="left:63px;top:3.5px" width="24" height="24"><use href="#i-folder"/></svg><span style="left:96px">success</span></div>
<div class="row" style="top:779.5px"><div class="tri-r" style="left:31.5px;top:10.5px"></div><svg class="i" style="left:51.4px;top:3.5px" width="24" height="24"><use href="#i-fstatic"/></svg><span style="left:84px">static</span></div>
<div class="row" style="top:812.5px"><div class="tri-r" style="left:31.5px;top:10.5px"></div><svg class="i" style="left:51.4px;top:3.5px" width="24" height="24"><use href="#i-folder"/></svg><span style="left:84px">uni_modules</span></div>
<div class="row" style="top:845.5px"><svg class="i" style="left:51.4px;top:3.5px" width="24" height="24"><use href="#i-git"/></svg><span style="left:84px">.gitignore</span></div>
<div class="row" style="top:878.5px"><svg class="i" style="left:51.4px;top:3.5px" width="24" height="24"><use href="#i-js"/></svg><span style="left:84px">app.js</span></div>
<div class="row" style="top:911.5px"><svg class="i" style="left:51.4px;top:3.5px" width="24" height="24"><use href="#i-json"/></svg><span style="left:84px">app.json</span></div>
<div class="row" style="top:944.5px"><svg class="i" style="left:51.4px;top:3.5px" width="24" height="24"><use href="#i-css"/></svg><span style="left:84px">app.wxss</span></div>
<div class="row" style="top:977.5px"><svg class="i" style="left:51.4px;top:3.5px" width="24" height="24"><use href="#i-json"/></svg><span style="left:84px">project.config.json</span></div>
<div class="row" style="top:1010.5px"><svg class="i" style="left:51.4px;top:3.5px" width="24" height="24"><use href="#i-json"/></svg><span style="left:84px">project.private.config.json</span></div>
<div class="row" style="top:1043.5px"><svg class="i" style="left:51.4px;top:3.5px" width="24" height="24"><use href="#i-json"/></svg><span style="left:84px">sitemap.json</span></div>
<div class="sec" style="top:1253px;height:26px;line-height:34px;border-top:1px solid #454545;background:#383838">大纲<div class="tri-r" style="left:12px;top:12px"></div></div>
</div>
<div class="a" id="vdiv2"></div>
<!-- ===== devtools ===== -->
<svg width="0" height="0" style="position:absolute"><defs>
<linearGradient id="sky" x1="0" y1="0" x2="0" y2="1"><stop offset="0" stop-color="#b7cff5"/><stop offset="1" stop-color="#e3ecf9"/></linearGradient>
<symbol id="n-img" viewBox="0 0 20 21"><path d="M.7 .5h14.800v18.800H.7z" fill="#5f6368" stroke="#dadce0" stroke-width="1"/><path d="M3 1.400h14.300l2.600 2.800v16.700H3z" fill="url(#sky)"/><path d="M3 1.400h14.300l2.600 2.800v16.700" fill="none" stroke="#f1f3f4" stroke-width=".5"/><path d="M17.200 1.400v3.200h2.700" fill="#f1f3f4" stroke="#9aa0a6" stroke-width=".6"/><path d="M6.300 8.900c-.5-1.300 1-2.200 2-1.600c.6-2 3.600-2 4.200 0c1.200-.5 2.300.5 1.700 1.600z" fill="#fff"/><path d="M5.400 20.900c1.500-3.500 4.500-5.400 7.800-5.200c2.600.2 4.800 1 6.700 2.400v2.800z" fill="#4aa93b"/></symbol>
<symbol id="n-doc" viewBox="0 0 20 21"><rect x=".4" y="0" width="15.400" height="19.800" rx=".6" fill="#fff" stroke="#b8b8b8" stroke-width=".5"/></symbol>
<symbol id="n-blank" viewBox="0 0 20 21"><rect x=".4" y="0" width="15.400" height="19.800" rx=".6" fill="#fff" stroke="#b8b8b8" stroke-width=".5"/><circle cx="4.900" cy="12.100" r=".9" fill="#fbe08a"/><circle cx="8" cy="9.300" r="1.600" fill="#efefef"/></symbol>
<symbol id="n-radio" viewBox="0 0 20 21"><rect x=".4" y="0" width="15.400" height="19.800" rx=".6" fill="#fff" stroke="#b8b8b8" stroke-width=".5"/><circle cx="7.900" cy="8.800" r="5.100" fill="none" stroke="#c6c6c6" stroke-width="1.100"/></symbol>
<symbol id="n-radiosel" viewBox="0 0 20 21"><rect x=".4" y="0" width="15.400" height="19.800" rx=".6" fill="#fff" stroke="#b8b8b8" stroke-width=".5"/><circle cx="7.900" cy="9" r="5.300" fill="none" stroke="#ffd24d" stroke-width="1.300"/><circle cx="7.900" cy="9" r="3.200" fill="#ffbf00"/></symbol>
<symbol id="n-edit" viewBox="0 0 20 21"><rect x=".4" y="0" width="15.400" height="19.800" rx=".6" fill="#fff" stroke="#b8b8b8" stroke-width=".5"/><path d="M2.400 11.700L10.400 3.300l3.200 3.300L5.600 14.900H2.400zM11.200 6.500l1.100 1" fill="none" stroke="#a6a6a6" stroke-width=".8"/></symbol>
<symbol id="n-gear" viewBox="0 0 24 24"><path d="M19.430 12.980c.040-.320.070-.640.070-.980s-.030-.660-.070-.980l2.110-1.650c.190-.150.240-.420.120-.640l-2-3.460c-.120-.220-.390-.300-.610-.220l-2.490 1c-.520-.400-1.080-.730-1.690-.980l-.380-2.650C14.460 2.180 14.250 2 14 2h-4c-.250 0-.460.180-.490.420l-.380 2.650c-.610.250-1.170.590-1.690.980l-2.490-1c-.230-.090-.490 0-.610.220l-2 3.460c-.130.220-.070.490.120.640l2.110 1.650c-.040.320-.070.650-.070.980s.030.660.070.980l-2.110 1.650c-.190.150-.240.420-.120.640l2 3.460c.120.220.390.300.610.220l2.490-1c.520.400 1.080.730 1.690.980l.380 2.650c.030.240.240.420.490.420h4c.250 0 .460-.180.490-.420l.380-2.650c.610-.250 1.170-.590 1.690-.980l2.490 1c.230.090.490 0 .610-.220l2-3.460c.120-.220.070-.490-.120-.640l-2.110-1.650zM12 15.500c-1.930 0-3.500-1.570-3.500-3.500s1.570-3.500 3.500-3.500 3.500 1.570 3.500 3.500-1.570 3.500-3.500 3.500z"/></symbol>
</defs></svg>
<div class="a" id="dev">
<div class="a" id="dtabs">
 <svg class="i" style="left:14px;top:10px" width="22" height="22" viewBox="0 0 22 22"><path d="M9.500 17.500H2a1 1 0 0 1-1-1V2a1 1 0 0 1 1-1h15a1 1 0 0 1 1 1v6.500" fill="none" stroke="#9aa0a6" stroke-width="1.600"/><path d="M8.500 8.500l12 4.800l-5.200 1.700l5 5l-1.800 1.800l-5-5l-1.900 5z" fill="#9aa0a6"/></svg>
 <div class="vsep" style="left:52px;top:8px;height:24px"></div>
 <div class="t" style="left:79px">Wxml</div><div class="t" style="left:160px">Console</div><div class="t" style="left:259px">Sources</div>
 <div class="a" style="left:339px;top:0;width:104px;height:39px;background:#000"></div><div class="t" style="left:357px">Network</div>
 <svg class="i" style="left:456px;top:14px" width="15" height="12" viewBox="0 0 15 12" fill="none" stroke="#c4c7c5" stroke-width="1.700"><path d="M1 1l5 5l-5 5M8 1l5 5l-5 5"/></svg>
 <svg class="i" style="left:588px;top:12px" width="16" height="16" viewBox="0 0 16 16"><circle cx="8" cy="8" r="8" fill="#ec3941"/><path d="M5 5l6 6M11 5l-6 6" stroke="#fff" stroke-width="1.700"/></svg>
 <div class="t" style="left:611px">5</div>
 <svg class="i" style="left:627px;top:11px" width="19" height="17" viewBox="0 0 19 17"><path d="M9.500 .5L18.500 16.500H.500z" fill="#f4bd00"/><path d="M9.500 6v5.500M9.500 13v2" stroke="#fff" stroke-width="1.800"/></svg>
 <div class="t" style="left:651px">13</div>
 <div class="vsep" style="left:684px;top:8px;height:24px"></div>
 <svg class="i" style="left:701px;top:8px;fill:#9aa0a6" width="24" height="24"><use href="#n-gear"/></svg>
 <svg class="i" style="left:753px;top:10px" width="5" height="21" viewBox="0 0 5 21" fill="#9aa0a6"><circle cx="2.500" cy="2.500" r="2.200"/><circle cx="2.500" cy="10.500" r="2.200"/><circle cx="2.500" cy="18.500" r="2.200"/></svg>
 <svg class="i" style="left:784px;top:10px" width="26" height="22" viewBox="0 0 26 22" fill="none" stroke="#6e7175" stroke-width="2.400"><path d="M9 5V1.500h15.500v13H21"/><rect x="1.500" y="7" width="16.500" height="13" fill="#4a4c50"/></svg>
</div>
<div class="a" id="ntool">
 <div class="a" style="left:14.500px;top:9.500px;width:19px;height:19px;border-radius:50%;background:#ff4a4f;box-shadow:0 0 4px 1.500px rgba(255,60,60,.5)"></div>
 <svg class="i" style="left:57px;top:10px" width="20" height="20" viewBox="0 0 20 20" fill="none" stroke="#9aa0a6" stroke-width="2.400"><circle cx="10" cy="10" r="8.300"/><path d="M4 4.500l12 11"/></svg>
 <div class="vsep" style="left:94px;top:8px;height:24px"></div>
 <svg class="i" style="left:111.500px;top:12px" width="21" height="18" viewBox="0 0 21 18"><path d="M.9 .9h19.200l-7.100 8.800v7.400h-5v-7.400z" fill="#1a6fb8" stroke="#1f7fd0" stroke-width="1.500" stroke-linejoin="round"/><path d="M4.300 2.700h12.400l-3 3.800h-6.400z" fill="#17518a"/></svg>
 <svg class="i" style="left:153px;top:10px" width="21" height="21" viewBox="0 0 21 21" fill="none" stroke="#9aa0a6" stroke-width="2.200"><circle cx="7.800" cy="7.800" r="6.300"/><path d="M12.500 12.500l7.500 7.500"/></svg>
 <div class="vsep" style="left:191px;top:8px;height:24px"></div>
 <div class="cb" style="left:207px;top:11.500px"></div><div class="t" style="left:234px">Preserve log</div>
 <div class="cb" style="left:349px;top:11.500px"></div><div class="t" style="left:375px">Disable cache</div>
 <div class="vsep" style="left:497px;top:8px;height:24px"></div>
 <div class="t" style="left:513px">Online</div>
 <div class="caret" style="left:605px;top:16px;border-top-color:#9aa0a6;border-left-width:6px;border-right-width:6px;border-top-width:9px"></div>
 <div class="vsep" style="left:634px;top:8px;height:24px"></div>
 <svg class="i" style="left:653px;top:10px" width="18" height="20" viewBox="0 0 18 20" fill="#9aa0a6"><path d="M9 0l8 9h-5v6h-6v-6H1zM1 17.500h16v2.200H1z"/></svg>
 <svg class="i" style="left:696px;top:10px" width="18" height="20" viewBox="0 0 18 20" fill="#9aa0a6"><path d="M6 0h6v6h5l-8 9l-8-9h5zM1 17.500h16v2.200H1z"/></svg>
 <div class="vsep" style="left:768px;top:8px;height:24px"></div>
 <svg class="i" style="left:785px;top:8px;fill:#9aa0a6" width="24" height="24"><use href="#n-gear"/></svg>
</div>
<div class="a" id="frow">
 <div class="a" style="left:4.500px;top:2.500px;width:248px;height:29.500px;border:1.500px solid #10639f;background:#202022"></div>
 <div class="t" style="left:11px;top:6.500px;color:#d5d7da">Filter</div>
 <div class="cb" style="left:270.500px;top:8.500px"></div><div class="t" style="left:297px;top:5.500px">Hide data URLs</div>
</div>
<div class="a" id="trow">
 <div class="a" style="left:6px;top:0;width:29px;height:33px;border-radius:8px;background:#6b6b6b"></div>
 <div class="t" style="left:11px;top:6px;color:#a8a8a8">All</div>
 <div class="vsep" style="left:42px;top:5px;height:24px"></div>
 <div class="t" style="left:53px;top:6px">Cloud</div><div class="t" style="left:115px;top:6px">XHR</div><div class="t" style="left:164px;top:6px">JS</div><div class="t" style="left:195px;top:6px">CSS</div><div class="t" style="left:240.500px;top:6px">Img</div><div class="t" style="left:287px;top:6px">Media</div><div class="t" style="left:351.500px;top:6px">Font</div><div class="t" style="left:402px;top:6px">Doc</div><div class="t" style="left:448px;top:6px">WS</div><div class="t" style="left:490px;top:6px">Manifest</div><div class="t" style="left:573px;top:6px">Other</div>
</div>
<div class="a" id="brow">
 <div class="cb" style="left:12.500px;top:6px"></div><div class="t" style="left:39px;top:3px">Has blocked cookies</div>
 <div class="cb" style="left:216.500px;top:6px"></div><div class="t" style="left:243px;top:3px">Blocked Requests</div>
</div>
<div class="a" id="ov">
 <div class="a" style="left:0;top:0;width:4px;height:28px;background:#5a5a5a"></div>
 <div class="a" style="left:191px;top:0;width:1px;height:121px;background:#3a3a3a"></div><div class="a" style="left:383px;top:0;width:1px;height:121px;background:#3a3a3a"></div><div class="a" style="left:575px;top:0;width:1px;height:121px;background:#3a3a3a"></div><div class="a" style="left:767px;top:0;width:1px;height:121px;background:#3a3a3a"></div>
 <div class="t" style="left:59.5px;width:127px;text-align:right;top:6px;font-size:14.500px;color:#e8eaed">50000 ms</div><div class="t" style="left:251.5px;width:127px;text-align:right;top:6px;font-size:14.500px;color:#e8eaed">100000 ms</div><div class="t" style="left:443.5px;width:127px;text-align:right;top:6px;font-size:14.500px;color:#e8eaed">150000 ms</div><div class="t" style="left:635.5px;width:127px;text-align:right;top:6px;font-size:14.500px;color:#e8eaed">200000 ms</div>
<div class="a" style="left:0px;top:37px;width:2px;height:3px;background:#a0a0a0"></div><div class="a" style="left:0px;top:41.5px;width:2px;height:3px;background:#29abcf"></div><div class="a" style="left:0px;top:46.0px;width:2px;height:3px;background:#29abcf"></div><div class="a" style="left:0px;top:50.5px;width:2px;height:3px;background:#29abcf"></div><div class="a" style="left:0px;top:54.89999999999998px;width:2px;height:3px;background:#29abcf"></div><div class="a" style="left:0px;top:59.39999999999998px;width:2px;height:3px;background:#29abcf"></div><div class="a" style="left:0px;top:63.89999999999998px;width:2px;height:3px;background:#29abcf"></div><div class="a" style="left:1.5px;top:68.19999999999999px;width:3.5px;height:3.5px;background:#1fb5a5"></div><div class="a" style="left:148.89999999999986px;top:37.0px;width:2.4px;height:3px;background:#a0a0a0"></div><div class="a" style="left:157.39999999999986px;top:37.0px;width:2.4px;height:3px;background:#a0a0a0"></div><div class="a" style="left:165.5px;top:37.0px;width:2.4px;height:3px;background:#a0a0a0"></div><div class="a" style="left:137.4000000000001px;top:73px;width:6.7px;height:2.6px;background:#1db86a"></div><div class="a" style="left:141.5px;top:77.30000000000001px;width:3px;height:3px;background:#29abcf"></div><div class="a" style="left:148.5999999999999px;top:77.30000000000001px;width:3px;height:3px;background:#29abcf"></div><div class="a" style="left:156.70000000000005px;top:77.30000000000001px;width:3px;height:3px;background:#29abcf"></div><div class="a" style="left:142.0999999999999px;top:81.89999999999998px;width:4px;height:3px;background:#29abcf"></div><div class="a" style="left:142.0999999999999px;top:86.39999999999998px;width:4px;height:3px;background:#29abcf"></div><div class="a" style="left:142.0999999999999px;top:90.89999999999998px;width:4px;height:3px;background:#29abcf"></div><div class="a" style="left:148.5999999999999px;top:95.39999999999998px;width:3px;height:3px;background:#29abcf"></div><div class="a" style="left:148.5999999999999px;top:99.80000000000001px;width:3px;height:3px;background:#29abcf"></div><div class="a" style="left:148.5999999999999px;top:104.30000000000001px;width:3px;height:3px;background:#29abcf"></div><div class="a" style="left:148.5999999999999px;top:108.80000000000001px;width:3px;height:3px;background:#29abcf"></div><div class="a" style="left:157.0999999999999px;top:108.80000000000001px;width:3px;height:3px;background:#29abcf"></div><div class="a" style="left:165.20000000000005px;top:104.30000000000001px;width:3px;height:3px;background:#29abcf"></div><div class="a" style="left:165.20000000000005px;top:108.80000000000001px;width:3px;height:3px;background:#29abcf"></div><div class="a" style="left:364.5px;top:37.0px;width:2.4px;height:3px;background:#a0a0a0"></div><div class="a" style="left:364.20000000000005px;top:41.5px;width:3px;height:3px;background:#29abcf"></div><div class="a" style="left:363.0px;top:77.05000000000001px;width:4px;height:3.5px;background:#29abcf"></div><div class="a" style="left:364.20000000000005px;top:113.19999999999999px;width:3px;height:3px;background:#29abcf"></div><div class="a" style="left:437.70000000000005px;top:37.0px;width:2.4px;height:3px;background:#a0a0a0"></div><div class="a" style="left:437.4000000000001px;top:46.0px;width:3px;height:3px;background:#29abcf"></div><div class="a" style="left:437.4000000000001px;top:50.5px;width:3px;height:3px;background:#29abcf"></div><div class="a" style="left:641.7px;top:37.0px;width:2.4px;height:3px;background:#a0a0a0"></div><div class="a" style="left:639.0px;top:54.89999999999998px;width:5px;height:3px;background:#29abcf"></div><div class="a" style="left:641.4000000000001px;top:59.39999999999998px;width:3px;height:3px;background:#29abcf"></div><div class="a" style="left:653.2px;top:54.89999999999998px;width:3px;height:3px;background:#29abcf"></div><div class="a" style="left:745.5px;top:37.0px;width:2.4px;height:3px;background:#a0a0a0"></div><div class="a" style="left:745.2px;top:54.89999999999998px;width:3px;height:3px;background:#29abcf"></div><div class="a" style="left:745.2px;top:63.89999999999998px;width:3px;height:3px;background:#29abcf"></div><div class="a" style="left:745.2px;top:68.30000000000001px;width:3px;height:3px;background:#29abcf"></div>
</div>
<div class="a" id="th">
 <div class="t" style="left:8px">Name</div><div class="t" style="left:201px">Stat...</div><div class="t" style="left:259px">Type</div><div class="t" style="left:317px">Initiator</div><div class="t" style="left:413px">Size</div><div class="t" style="left:470px">Time</div><div class="t" style="left:527px">Waterfall</div>
 <div class="a" style="left:793px;top:14px;width:0;height:0;border-left:6px solid transparent;border-right:6px solid transparent;border-bottom:10px solid #9aa0a6"></div>
</div>
<div class="a" id="rows">
<div class="r o" style="top:-14px"><svg class="i" style="left:12px;top:7px" width="20" height="21"><use href="#n-img"/></svg><span style="left:36px">no_adress.png</span><span style="left:201px">307</span><span style="left:259px">/ R...</span><span style="left:317px;color:#9aa0a6">Other</span><span style="left:406px;width:50px;text-align:right">0 B</span><span style="left:463px;width:50.5px;text-align:right">2 ms</span></div>
<div class="r" style="top:18px"><svg class="i" style="left:12px;top:7px" width="20" height="21"><use href="#n-blank"/></svg><span style="left:36px">no_adress.png</span><span style="left:201px">200</span><span style="left:259px">png</span><span style="left:317px"><u>:16173/s...</u></span><span style="left:413px">49....</span><span style="left:463px;width:50.5px;text-align:right">6 ms</span><div class="wb" style="left:583.5px;top:7.5px"></div></div>
<div class="r o" style="top:50px"><svg class="i" style="left:12px;top:7px" width="20" height="21"><use href="#n-img"/></svg><span style="left:36px;letter-spacing:0.05px">icon-radio-select...</span><span style="left:201px">307</span><span style="left:259px">/ R...</span><span style="left:317px"><u>:16173/_...</u></span><span style="left:406px;width:50px;text-align:right">0 B</span><span style="left:470px">15 ...</span></div>
<div class="r" style="top:82px"><svg class="i" style="left:12px;top:7px" width="20" height="21"><use href="#n-img"/></svg><span style="left:36px">icon-radio.png</span><span style="left:201px">307</span><span style="left:259px">/ R...</span><span style="left:317px"><u>:16173/_...</u></span><span style="left:406px;width:50px;text-align:right">0 B</span><span style="left:470px">15 ...</span></div>
<div class="r o" style="top:114px"><svg class="i" style="left:12px;top:7px" width="20" height="21"><use href="#n-radio"/></svg><span style="left:36px">icon-radio.png</span><span style="left:201px">200</span><span style="left:259px">png</span><span style="left:317px"><u>:16173/s...</u></span><span style="left:413px">1.1 ...</span><span style="left:463px;width:50.5px;text-align:right">6 ms</span><div class="wb" style="left:586.5px;top:7.5px"></div></div>
<div class="r" style="top:146px"><svg class="i" style="left:12px;top:7px" width="20" height="21"><use href="#n-radiosel"/></svg><span style="left:36px;letter-spacing:0.05px">icon-radio-select...</span><span style="left:201px">200</span><span style="left:259px">png</span><span style="left:317px"><u>:16173/s...</u></span><span style="left:413px">1.2 ...</span><span style="left:463px;width:50.5px;text-align:right">6 ms</span><div class="wb" style="left:586.5px;top:7.5px"></div></div>
<div class="r o" style="top:178px"><svg class="i" style="left:12px;top:7px" width="20" height="21"><use href="#n-doc"/></svg><span style="left:36px">addressBook</span><span style="left:201px">200</span><span style="left:259px">xhr</span><span style="left:317px"><u>index.js:1</u></span><span style="left:413px">204...</span><span style="left:470px">19 ...</span><div class="wb" style="left:657.5px;top:7.5px"></div></div>
<div class="r" style="top:210px"><svg class="i" style="left:12px;top:7px" width="20" height="21"><use href="#n-doc"/></svg><span style="left:36px">list</span><span style="left:201px">200</span><span style="left:259px">xhr</span><span style="left:317px"><u>index.js:1</u></span><span style="left:413px">464...</span><span style="left:470px">14 ...</span><div class="wb" style="left:658.5px;top:7.5px"></div></div>
<div class="r o" style="top:242px"><svg class="i" style="left:12px;top:7px" width="20" height="21"><use href="#n-img"/></svg><span style="left:36px">edit.png</span><span style="left:201px">307</span><span style="left:259px">/ R...</span><span style="left:317px;color:#9aa0a6">Other</span><span style="left:406px;width:50px;text-align:right">0 B</span><span style="left:463px;width:50.5px;text-align:right">6 ms</span></div>
<div class="r" style="top:274px"><svg class="i" style="left:12px;top:7px" width="20" height="21"><use href="#n-img"/></svg><span style="left:36px">no_adress.png</span><span style="left:201px">307</span><span style="left:259px">/ R...</span><span style="left:317px;color:#9aa0a6">Other</span><span style="left:406px;width:50px;text-align:right">0 B</span><span style="left:463px;width:50.5px;text-align:right">5 ms</span></div>
<div class="r o" style="top:306px"><svg class="i" style="left:12px;top:7px" width="20" height="21"><use href="#n-edit"/></svg><span style="left:36px">edit.png</span><span style="left:201px">200</span><span style="left:259px">png</span><span style="left:317px"><u>:16173/s...</u></span><span style="left:413px">942...</span><span style="left:470px">66 ...</span><div class="wb" style="left:658.5px;top:7.5px"></div></div>
<div class="r" style="top:338px"><svg class="i" style="left:12px;top:7px" width="20" height="21"><use href="#n-blank"/></svg><span style="left:36px">no_adress.png</span><span style="left:201px">304</span><span style="left:259px">png</span><span style="left:317px"><u>:16173/s...</u></span><span style="left:406px;width:50px;text-align:right">90 B</span><span style="left:470px">69 ...</span><div class="wb" style="left:658.5px;top:7.5px"></div></div>
<div class="r o" style="top:370px"><svg class="i" style="left:12px;top:7px" width="20" height="21"><use href="#n-img"/></svg><span style="left:36px;letter-spacing:0.05px">icon-radio-select...</span><span style="left:201px">307</span><span style="left:259px">/ R...</span><span style="left:317px"><u>:16173/_...</u></span><span style="left:406px;width:50px;text-align:right">0 B</span><span style="left:470px">15 ...</span></div>
<div class="r" style="top:402px"><svg class="i" style="left:12px;top:7px" width="20" height="21"><use href="#n-img"/></svg><span style="left:36px">icon-radio.png</span><span style="left:201px">307</span><span style="left:259px">/ R...</span><span style="left:317px"><u>:16173/_...</u></span><span style="left:406px;width:50px;text-align:right">0 B</span><span style="left:470px">14 ...</span></div>
<div class="r o" style="top:434px"><svg class="i" style="left:12px;top:7px" width="20" height="21"><use href="#n-radio"/></svg><span style="left:36px">icon-radio.png</span><span style="left:201px">304</span><span style="left:259px">png</span><span style="left:317px"><u>:16173/s...</u></span><span style="left:406px;width:50px;text-align:right">90 B</span><span style="left:463px;width:50.5px;text-align:right">4 ms</span><div class="wb" style="left:684.5px;top:7.5px"></div></div>
<div class="r" style="top:466px"><svg class="i" style="left:12px;top:7px" width="20" height="21"><use href="#n-radiosel"/></svg><span style="left:36px;letter-spacing:0.05px">icon-radio-select...</span><span style="left:201px">304</span><span style="left:259px">png</span><span style="left:317px"><u>:16173/s...</u></span><span style="left:406px;width:50px;text-align:right">90 B</span><span style="left:463px;width:50.5px;text-align:right">4 ms</span><div class="wb" style="left:684.5px;top:7.5px"></div></div>
<div class="r o" style="top:498px"><svg class="i" style="left:12px;top:7px" width="20" height="21"><use href="#n-doc"/></svg><span style="left:36px">addressBook</span><span style="left:201px">200</span><span style="left:259px">xhr</span><span style="left:317px"><u>index.js:1</u></span><span style="left:413px">204...</span><span style="left:470px">334...</span><div class="wb" style="left:758.5px;top:7.5px"></div></div>
<div class="r" style="top:530px"><svg class="i" style="left:12px;top:7px" width="20" height="21"><use href="#n-doc"/></svg><span style="left:36px">list</span><span style="left:201px">200</span><span style="left:259px">xhr</span><span style="left:317px"><u>index.js:1</u></span><span style="left:413px">732...</span><span style="left:470px">16 ...</span><div class="wb" style="left:758.5px;top:7.5px"></div></div>
<div class="r o" style="top:562px"><svg class="i" style="left:12px;top:7px" width="20" height="21"><use href="#n-img"/></svg><span style="left:36px">edit.png</span><span style="left:201px">307</span><span style="left:259px">/ R...</span><span style="left:317px"><u>:16173/_...</u></span><span style="left:406px;width:50px;text-align:right">0 B</span><span style="left:463px;width:50.5px;text-align:right">6 ms</span></div>
<div class="r" style="top:594px"><svg class="i" style="left:12px;top:7px" width="20" height="21"><use href="#n-img"/></svg><span style="left:36px">no_adress.png</span><span style="left:201px">307</span><span style="left:259px">/ R...</span><span style="left:317px;color:#9aa0a6">Other</span><span style="left:406px;width:50px;text-align:right">0 B</span><span style="left:463px;width:50.5px;text-align:right">3 ms</span></div>
<div class="r o" style="top:626px"><svg class="i" style="left:12px;top:7px" width="20" height="21"><use href="#n-edit"/></svg><span style="left:36px">edit.png</span><span style="left:201px">304</span><span style="left:259px">png</span><span style="left:317px"><u>:16173/s...</u></span><span style="left:406px;width:50px;text-align:right">90 B</span><span style="left:470px">74 ...</span><div class="wb" style="left:758.5px;top:7.5px"></div></div>
<div class="r" style="top:658px"><svg class="i" style="left:12px;top:7px" width="20" height="21"><use href="#n-blank"/></svg><span style="left:36px">no_adress.png</span><span style="left:201px">304</span><span style="left:259px">png</span><span style="left:317px"><u>:16173/s...</u></span><span style="left:406px;width:50px;text-align:right">90 B</span><span style="left:470px">74 ...</span><div class="wb" style="left:758.5px;top:7.5px"></div></div>
<div class="r o" style="top:690px"><svg class="i" style="left:12px;top:7px" width="20" height="21"><use href="#n-doc"/></svg><span style="left:36px">default</span><span style="left:201px">200</span><span style="left:259px">xhr</span><span style="left:317px"><u>index.js:1</u></span><span style="left:413px">204...</span><span style="left:470px">24 ...</span><div class="wb" style="left:763.5px;top:7.5px"></div></div>
<div class="r" style="top:722px"><svg class="i" style="left:12px;top:7px" width="20" height="21"><use href="#n-doc"/></svg><span style="left:36px">2?id=2</span><span style="left:201px">200</span><span style="left:259px">xhr</span><span style="left:317px"><u>index.js:1</u></span><span style="left:413px">462...</span><span style="left:470px">28 ...</span><div class="wb" style="left:795.5px;top:7.5px"></div></div>
<div class="r o" style="top:754px"><svg class="i" style="left:12px;top:7px" width="20" height="21"><use href="#n-img"/></svg><span style="left:36px;letter-spacing:0.05px">icon-radio-select...</span><span style="left:201px">307</span><span style="left:259px">/ R...</span><span style="left:317px"><u>:16173/_...</u></span><span style="left:406px;width:50px;text-align:right">0 B</span><span style="left:470px">35 ...</span></div>
<div class="r" style="top:786px"><svg class="i" style="left:12px;top:7px" width="20" height="21"><use href="#n-img"/></svg><span style="left:36px">icon-radio.png</span><span style="left:201px">307</span><span style="left:259px">/ R...</span><span style="left:317px"><u>:16173/_...</u></span><span style="left:406px;width:50px;text-align:right">0 B</span><span style="left:470px">35 ...</span></div>
<div class="r o" style="top:818px"><svg class="i" style="left:12px;top:7px" width="20" height="21"><use href="#n-radio"/></svg><span style="left:36px">icon-radio.png</span><span style="left:201px">304</span><span style="left:259px">png</span><span style="left:317px"><u>:16173/s...</u></span><span style="left:406px;width:50px;text-align:right">90 B</span><span style="left:463px;width:50.5px;text-align:right">5 ms</span><div class="wb" style="left:795.5px;top:7.5px"></div></div>
<div class="r" style="top:850px"><svg class="i" style="left:12px;top:7px" width="20" height="21"><use href="#n-radiosel"/></svg><span style="left:36px;letter-spacing:0.05px">icon-radio-select...</span><span style="left:201px">304</span><span style="left:259px">png</span><span style="left:317px"><u>:16173/s...</u></span><span style="left:406px;width:50px;text-align:right">90 B</span><span style="left:463px;width:50.5px;text-align:right">4 ms</span><div class="wb" style="left:795.5px;top:7.5px"></div></div>
</div>
<div class="colsep" style="left:194px"></div><div class="colsep" style="left:252px"></div><div class="colsep" style="left:310px"></div><div class="colsep" style="left:406px"></div><div class="colsep" style="left:462.500px"></div><div class="colsep" style="left:519px;width:2px;background:#454545"></div>
<div class="a" style="left:525px;top:354px;width:1.500px;height:883px;background:#b3261e"></div><div class="a" style="left:527px;top:354px;width:1.500px;height:883px;background:#3b6fd4"></div>
<div class="a" style="left:664px;top:354px;width:2px;height:883px;background:#373737"></div>
<div class="a" style="left:799px;top:354px;width:19px;height:883px;background:#202020;border-left:1px solid #3a3a3a"></div>
<div class="a" style="left:800px;top:884px;width:18px;height:353px;background:#353535;border-top:1px solid #5a5a5a;border-left:1px solid #4a4a4a;border-radius:3px 0 0 0"></div>
<div class="a" style="left:0;top:313px;width:1px;height:923px;background:#3a3a3a"></div>
<div class="a" id="sum">
 <div class="t" style="left:16.500px">69 requests</div><div class="vsep" style="left:122.500px;top:8px;height:24px"></div><div class="t" style="left:137px">126 kB transferred</div><div class="vsep" style="left:296px;top:8px;height:24px"></div><div class="t" style="left:310.500px">387 kB resources</div>
</div>
</div>
<div class="a" style="left:1878px;top:46px;width:2px;height:1420px;background:#3c3c3c"></div>
<!-- ===== status bar ===== -->
<div class="a" id="status">
<div class="t" style="left:12px;top:9px;font-size:18px">页面路径</div>
<div class="caret" style="left:92px;top:20px;border-top-color:#9a9a9a;border-left-width:4.500px;border-right-width:4.500px;border-top-width:5.500px"></div>
<div class="a" style="left:113px;top:11px;width:1px;height:20px;background:#6a6a6a"></div>
<div class="t" style="left:125px;letter-spacing:-0.150px">pages/addOrEditAddress/addOrEdi...</div>
<svg class="i" style="left:428px;top:14px" width="19" height="20" viewBox="0 0 19 20" fill="none" stroke="#9a9a9a" stroke-width="1.600"><path d="M3.500 15H1V1h13.500v3"/><rect x="4.500" y="4.500" width="13.500" height="14.500" rx="1"/></svg>
<svg class="i" style="left:473px;top:12px" width="26" height="23" viewBox="0 0 26 23" fill="none" stroke="#9a9a9a" stroke-width="1.500"><path d="M7.500 10.500a5.800 5.800 0 0 1 11.600 0v4.500a5.800 5.800 0 0 1-11.600 0z"/><path d="M13.300 4.800v16M9.800 5.500a3.600 3.600 0 0 1 7 0M7.500 9L4.500 8L3 5.500M7.500 13H2.500M7.500 17l-3 1l-1.500 2.500M19.100 9l3-1l1.500-2.500M19.100 13h5M19.100 17l3 1l1.500 2.500"/></svg>
<svg class="i" style="left:524px;top:16px" width="24" height="16" viewBox="0 0 24 16" fill="none" stroke="#9a9a9a" stroke-width="1.500"><path d="M1 8C4 3.300 7.500 1 12 1s8 2.300 11 7c-3 4.700-6.500 7-11 7S4 12.700 1 8z"/><circle cx="12" cy="8" r="3.300"/></svg>
<svg class="i" style="left:575px;top:22px" width="20" height="4" viewBox="0 0 20 4" fill="#9a9a9a"><circle cx="1.700" cy="2" r="1.500"/><circle cx="9.700" cy="2" r="1.500"/><circle cx="17.700" cy="2" r="1.500"/></svg>
<div class="a" style="left:608px;top:0;width:1.5px;height:40px;background:#262626"></div>
<svg class="i" style="left:633px;top:15px" width="18" height="18" viewBox="0 0 18 18" fill="none" stroke="#9a9a9a" stroke-width="1.400"><circle cx="9" cy="9" r="8"/><path d="M5.500 5.500l7 7M12.500 5.500l-7 7"/></svg>
<div class="t" style="left:658px;top:11px">0</div>
<svg class="i" style="left:674px;top:15px" width="19" height="18" viewBox="0 0 19 18" fill="none" stroke="#9a9a9a" stroke-width="1.400" stroke-linejoin="round"><path d="M9.500 1.500L18 16.500H1z"/><path d="M9.500 7v5M9.500 13.500v1.500"/></svg>
<div class="t" style="left:698px;top:11px">0</div>
<div class="t" style="left:1420px">行 20510，列 49</div>
<div class="t" style="left:1576px">空格: 2</div>
<div class="t" style="left:1655px">UTF-8</div>
<div class="t" style="left:1726px">CRLF</div>
<div class="t" style="left:1789px;letter-spacing:-0.450px">JavaScript</div>
</div>
<!-- window corners -->
<svg class="i" style="left:0;top:0" width="14" height="14" viewBox="0 0 14 14"><path d="M0 0h12A12 12 0 0 0 0 12z" fill="#262626"/></svg>
<svg class="i" style="left:1866px;top:0" width="14" height="14" viewBox="0 0 14 14"><path d="M14 0H2A12 12 0 0 1 14 12z" fill="#222"/></svg>
<svg class="i" style="left:0;top:1488px" width="14" height="14" viewBox="0 0 14 14"><path d="M0 14h12A12 12 0 0 1 0 2z" fill="#262626"/></svg>
<svg class="i" style="left:1866px;top:1488px" width="14" height="14" viewBox="0 0 14 14"><path d="M14 14H2A12 12 0 0 0 14 2z" fill="#222"/></svg>
</body>
</html>
